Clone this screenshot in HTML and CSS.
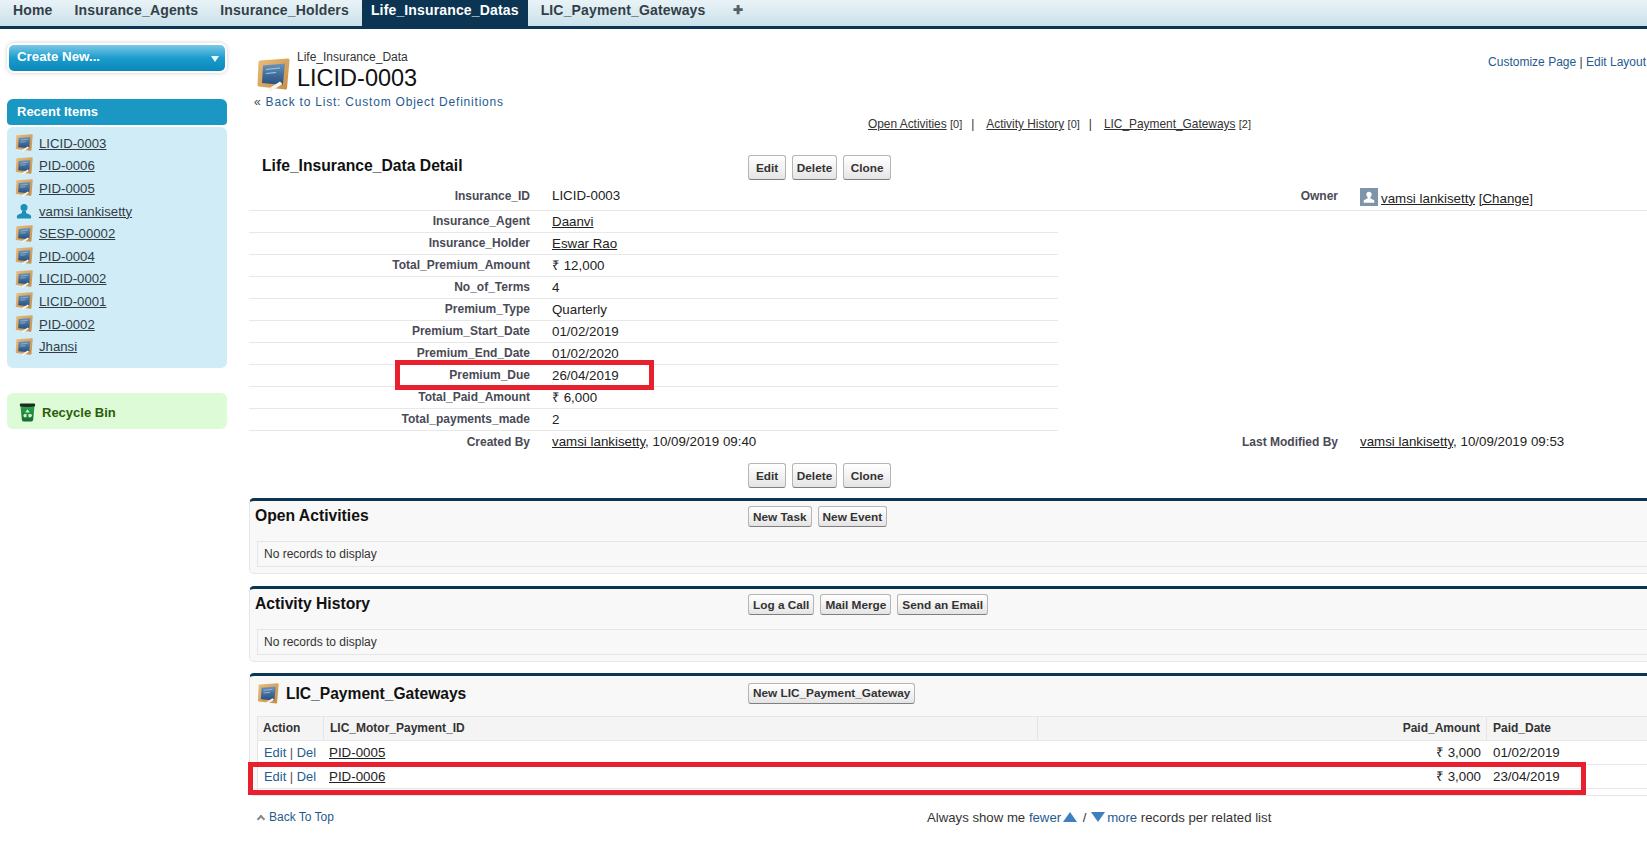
FILE: index.html
```html
<!DOCTYPE html>
<html lang="en">
<head>
<meta charset="utf-8">
<title>Life_Insurance_Data LICID-0003</title>
<link rel="stylesheet" href="styles.css">
</head>
<body>
<svg class="defs" width="0" height="0" aria-hidden="true">
  <defs>
    <linearGradient id="board" x1="0" y1="0" x2="0" y2="1">
      <stop offset="0" stop-color="#6c95bd"/>
      <stop offset=".55" stop-color="#3f6b99"/>
      <stop offset="1" stop-color="#2a4f7c"/>
    </linearGradient>
    <linearGradient id="frame" x1="0" y1="0" x2="1" y2="1">
      <stop offset="0" stop-color="#e8bb78"/>
      <stop offset="1" stop-color="#c98f45"/>
    </linearGradient>
    <linearGradient id="binfill" x1="0" y1="0" x2="0" y2="1">
      <stop offset="0" stop-color="#2ea64f"/>
      <stop offset="1" stop-color="#126b2c"/>
    </linearGradient>
  </defs>
  <symbol id="tile" viewBox="0 0 34 34">
    <path d="M4 4 L32 2 L29.500 30 L3 27 Z" fill="url(#frame)" stroke="url(#frame)" stroke-width="3" stroke-linejoin="round"/>
    <path d="M7 7.500 L29 5.500 L26.800 27 L6 25 Z" fill="url(#board)"/>
    <path d="M10 11.500 L24 10 M10 15.500 L20 14.500" stroke="#a9c6df" stroke-width="1.200" fill="none"/>
    <path d="M12 31 L24 23.500 L26.500 26 L15.500 33 Q12 33.500 12 31 Z" fill="#f4f4f0"/>
  </symbol>
  <symbol id="person" viewBox="0 0 16 16">
    <circle cx="8" cy="4.500" r="3.500"/>
    <path d="M6 8 H10 V10 L14.500 12 Q15.500 13 15 15.500 H1 Q.5 13 1.500 12 L6 10 Z"/>
  </symbol>
</svg>

<nav class="tabbar">
  <a class="tab">Home</a>
  <a class="tab">Insurance_Agents</a>
  <a class="tab">Insurance_Holders</a>
  <a class="tab tab-active">Life_Insurance_Datas</a>
  <a class="tab">LIC_Payment_Gateways</a>
  <a class="tab tab-plus">&#10010;</a>
</nav>

<div class="shell">
  <aside class="sidebar">
    <div class="create-wrap">
      <div class="create"><span>Create New...</span><i class="create-caret"></i></div>
    </div>
    <h2 class="recent-head">Recent Items</h2>
    <ul class="recent">
      <li><svg class="ri"><use href="#tile"/></svg><a>LICID-0003</a></li>
      <li><svg class="ri"><use href="#tile"/></svg><a>PID-0006</a></li>
      <li><svg class="ri"><use href="#tile"/></svg><a>PID-0005</a></li>
      <li><svg class="ri ri-person"><use href="#person"/></svg><a>vamsi lankisetty</a></li>
      <li><svg class="ri"><use href="#tile"/></svg><a>SESP-00002</a></li>
      <li><svg class="ri"><use href="#tile"/></svg><a>PID-0004</a></li>
      <li><svg class="ri"><use href="#tile"/></svg><a>LICID-0002</a></li>
      <li><svg class="ri"><use href="#tile"/></svg><a>LICID-0001</a></li>
      <li><svg class="ri"><use href="#tile"/></svg><a>PID-0002</a></li>
      <li><svg class="ri"><use href="#tile"/></svg><a>Jhansi</a></li>
    </ul>
    <div class="recycle">
      <svg class="bin" viewBox="0 0 18 20">
        <path d="M1.500 2 H16.500 L15 17.500 Q14.800 19.500 13 19.500 H5 Q3.200 19.500 3 17.500 Z" fill="url(#binfill)"/>
        <path d="M1 1.500 Q1 .5 2 .5 H16 Q17 .5 17 1.500 V3.500 Q9 5 1 3.500 Z" fill="#1c2a20"/>
        <path d="M9 6.500 L11.500 10 H6.500 Z M5.500 11.500 H8 V15 H5.500 L4.500 13.500 Z M10 11.500 H13 L13.800 13.500 L12.500 15 H10 Z" fill="#c8f0cf"/>
      </svg>
      <span>Recycle Bin</span>
    </div>
  </aside>

  <main class="main">
    <header class="page-head">
      <svg class="page-icon"><use href="#tile"/></svg>
      <div class="page-titles">
        <div class="page-type">Life_Insurance_Data</div>
        <h1 class="page-name">LICID-0003</h1>
      </div>
      <div class="page-links"><a>Customize Page</a> | <a>Edit Layout</a></div>
    </header>
    <div class="back"><span class="back-q">«</span> <a>Back to List: Custom Object Definitions</a></div>

    <div class="rel-links">
      <a>Open Activities</a> <small>[0]</small><span class="rel-sep">|</span><a>Activity History</a> <small>[0]</small><span class="rel-sep">|</span><a>LIC_Payment_Gateways</a> <small>[2]</small>
    </div>

    <section class="detail">
      <div class="detail-head">
        <h2 class="detail-title">Life_Insurance_Data Detail</h2>
        <div class="btns btns-lg"><button>Edit</button><button class="btn-tight">Delete</button><button>Clone</button></div>
      </div>
      <div class="row row-wide row-first">
        <span class="lbl">Insurance_ID</span><span class="val">LICID-0003</span>
        <span class="lbl lbl2">Owner</span>
        <span class="val val-owner"><span class="owner-pic"><svg><use href="#person"/></svg></span><span class="owner-text"><a>vamsi lankisetty</a> <a>[Change]</a></span></span>
      </div>
      <div class="row"><span class="lbl">Insurance_Agent</span><span class="val"><a>Daanvi</a></span></div>
      <div class="row"><span class="lbl">Insurance_Holder</span><span class="val"><a>Eswar Rao</a></span></div>
      <div class="row"><span class="lbl">Total_Premium_Amount</span><span class="val">₹ 12,000</span></div>
      <div class="row"><span class="lbl">No_of_Terms</span><span class="val">4</span></div>
      <div class="row"><span class="lbl">Premium_Type</span><span class="val">Quarterly</span></div>
      <div class="row"><span class="lbl">Premium_Start_Date</span><span class="val">01/02/2019</span></div>
      <div class="row"><span class="lbl">Premium_End_Date</span><span class="val">01/02/2020</span></div>
      <div class="row row-marked"><span class="lbl">Premium_Due</span><span class="val">26/04/2019</span><i class="mark mark-due"></i></div>
      <div class="row"><span class="lbl">Total_Paid_Amount</span><span class="val">₹ 6,000</span></div>
      <div class="row"><span class="lbl">Total_payments_made</span><span class="val">2</span></div>
      <div class="row row-wide row-last">
        <span class="lbl">Created By</span><span class="val"><a>vamsi lankisetty</a>, 10/09/2019 09:40</span>
        <span class="lbl lbl2">Last Modified By</span><span class="val"><a>vamsi lankisetty</a>, 10/09/2019 09:53</span>
      </div>
      <div class="btns btns-lg btns-foot"><button>Edit</button><button class="btn-tight">Delete</button><button>Clone</button></div>
    </section>

    <section class="panel">
      <div class="panel-head">
        <h3 class="panel-title">Open Activities</h3>
        <div class="btns"><button>New Task</button><button>New Event</button></div>
      </div>
      <div class="empty">No records to display</div>
    </section>

    <section class="panel">
      <div class="panel-head">
        <h3 class="panel-title">Activity History</h3>
        <div class="btns"><button>Log a Call</button><button>Mail Merge</button><button>Send an Email</button></div>
      </div>
      <div class="empty">No records to display</div>
    </section>

    <section class="panel panel-list">
      <div class="panel-head panel-head-list">
        <h3 class="panel-title"><svg class="list-icon"><use href="#tile"/></svg>LIC_Payment_Gateways</h3>
        <div class="btns"><button>New LIC_Payment_Gateway</button></div>
      </div>
      <div class="list">
        <div class="list-row list-header">
          <span class="c-act">Action</span><span class="c-id">LIC_Motor_Payment_ID</span><span class="c-amt">Paid_Amount</span><span class="c-date">Paid_Date</span>
        </div>
        <div class="list-row">
          <span class="c-act"><a class="lnk">Edit</a> | <a class="lnk">Del</a></span><span class="c-id"><a>PID-0005</a></span><span class="c-amt">₹ 3,000</span><span class="c-date">01/02/2019</span>
        </div>
        <div class="list-row">
          <span class="c-act"><a class="lnk">Edit</a> | <a class="lnk">Del</a></span><span class="c-id"><a>PID-0006</a></span><span class="c-amt">₹ 3,000</span><span class="c-date">23/04/2019</span>
        </div>
        <i class="mark mark-pay"></i>
      </div>
    </section>

    <footer class="foot">
      <div class="foot-top"><i class="foot-caret"></i><a>Back To Top</a></div>
      <div class="foot-more">Always show me <a>fewer</a><i class="tri tri-up"></i> / <i class="tri tri-down"></i><a>more</a> records per related list</div>
    </footer>
  </main>
</div>
</body>
</html>
```
FILE: styles.css
```css
* { box-sizing: border-box; }
html, body { margin: 0; height: 849px; overflow: hidden; background: #fff; }
body { font-family: "Liberation Sans", Arial, sans-serif; font-size: 12px; color: #222; width: 1647px; }
a { color: inherit; }
h1, h2, h3, ul { margin: 0; padding: 0; }
.defs { position: absolute; }

/* tab bar */
.tabbar { display: flex; gap: 4px; height: 29px; padding-left: 4px; border-bottom: 3px solid #0b3553; background: linear-gradient(#e9f3f7, #cbe1ea); }
.tab { display: block; padding: 0 9px; line-height: 20px; font-size: 14px; font-weight: 700; letter-spacing: .15px; color: #333f48; }
.tab-active { color: #fff; background: #0b3553; }
.tab-plus { margin-left: 6px; font-size: 12px; color: #555f66; }

/* layout */
.shell { display: flex; align-items: flex-start; }
.sidebar { flex: none; width: 220px; margin: 16px 0 0 7px; }
.main { flex: none; width: 1500px; margin-left: 22px; padding-top: 22px; }

/* sidebar */
.create-wrap { padding: 0 2px; }
.create { display: flex; align-items: center; justify-content: space-between; height: 26px; padding: 0 6px 3px 8px; border-radius: 5px; background: linear-gradient(#7cc9e6, #1b9ccd 50%, #0a88b9); box-shadow: 0 0 0 2px #fff, 0 0 4px 2px #ccc; color: #fff; font-size: 13.300px; font-weight: 700; }
.create-caret { width: 0; height: 0; margin-top: 5px; border: 4.500px solid transparent; border-top: 6px solid #eef8fc; border-bottom: 0; }
.recent-head { height: 26px; margin-top: 28px; padding-left: 10px; border-radius: 6px 6px 4px 4px; background: #1a97c3; color: #fff; font-size: 13px; font-weight: 700; line-height: 26px; }
.recent { margin-top: 2px; height: 241px; padding: 5px 0 0 8px; border-radius: 6px; background: #cfecf7; list-style: none; }
.recent li { display: flex; align-items: center; gap: 6px; height: 22.600px; font-size: 13.200px; color: #333c44; }
.recent a { text-decoration: underline; }
.ri { flex: none; width: 18px; height: 18px; }
.ri-person { fill: #1d8fb8; padding: 1px; }
.recycle { display: flex; align-items: center; gap: 6px; height: 36px; margin-top: 25px; padding: 3px 0 0 12px; border-radius: 6px; background: #dcfbd6; color: #2d5b0b; font-size: 13px; font-weight: 700; }
.bin { width: 17px; height: 19px; }

/* header */
.page-head { display: flex; align-items: flex-start; width: 1397px; padding-left: 7px; height: 44px; }
.page-icon { flex: none; width: 34px; height: 34px; margin-top: 7px; }
.page-titles { margin-left: 7px; }
.page-type { font-size: 12px; line-height: 13px; color: #333; }
.page-name { font-size: 23.500px; font-weight: 400; line-height: 28px; color: #111; }
.page-links { margin: 4px 0 0 auto; white-space: nowrap; color: #333; line-height: 14px; }
.page-links a, .back a, .lnk, .foot-more a, .foot-top a { color: #1f5b8f; }
.back { padding-left: 5px; height: 15px; line-height: 15px; letter-spacing: .79px; color: #444; }
.rel-links { margin: 6px 0 0 619px; height: 20px; line-height: 16px; font-size: 11.900px; color: #333; }
.rel-links a { text-decoration: underline; }
.rel-links small { font-size: 11px; }
.rel-sep { margin: 0 12px 0 9px; }

/* detail */
.detail { margin-top: 19px; }
.detail-head { display: flex; align-items: center; height: 25px; padding-left: 13px; }
.detail-title { width: 486px; margin-top: -3px; font-size: 15.700px; font-weight: 700; color: #111; }
.btns { display: flex; gap: 6px; }
.btns button { height: 21px; padding: 0 4px; border: 1px solid #b5b5b5; border-bottom-color: #7f7f7f; border-radius: 3px; background: linear-gradient(#fff, #f0f0f0 60%, #e4e4e4); color: #333; font: 700 11.800px "Liberation Sans", Arial, sans-serif; white-space: nowrap; }
.btns-lg button { height: 25px; padding: 0 7px; }
.btns-lg .btn-tight { padding: 0 3.500px; }
.btns-foot { margin: 10px 0 0 499px; }
.row { position: relative; display: flex; width: 809px; height: 22px; padding-bottom: 1px; align-items: center; border-bottom: 1px solid #e8e8e8; }
.row-wide { width: 100%; }
.row-first { height: 31px; padding: 1px 0 0; }
.row-last { border-bottom: 0; }
.lbl { flex: none; width: 281px; text-align: right; font-weight: 700; color: #4a4a56; }
.val { flex: none; width: 530px; padding-left: 22px; font-size: 13.330px; color: #222; white-space: nowrap; }
.val a { text-decoration: underline; }
.lbl2 { width: 278px; }
.val-owner { display: flex; align-items: center; gap: 3px; margin-top: 5px; }
.owner-pic { display: flex; width: 18px; height: 18px; padding: 3px; background: #7d94aa; fill: #fff; margin-top: -3px; }
.owner-pic svg { width: 12px; height: 12px; }
.mark { position: absolute; border: 5px solid #e8202e; pointer-events: none; }
.mark-due { left: 146px; top: -5px; width: 259px; height: 30px; }

/* panels */
.panel { height: 76px; margin-top: 10px; border-top: 3px solid #0b3553; border-left: 1px solid #e6e6e6; border-bottom: 1px solid #e6e6e6; border-radius: 5px 0 0 5px; background: #f8f8f8; }
.panel + .panel { margin-top: 12px; }
.panel-head { display: flex; align-items: center; height: 40px; padding: 0 0 9px 5px; }
.panel-title { display: flex; align-items: center; width: 493px; margin-top: -1px; font-size: 15.700px; font-weight: 700; color: #111; }
.empty { height: 26px; margin-left: 7px; padding-left: 6px; border: 1px solid #e6e6e6; border-right: 0; line-height: 24px; color: #333; }
.panel + .panel-list { height: 123px; margin-top: 11px; }
.panel-head-list { padding: 0 0 5px 7px; }
.panel-list .panel-title { width: 491px; margin-top: 1px; font-size: 15.600px; }
.panel-list .btns { margin-top: -1px; }
.list-icon { width: 22px; height: 24px; margin-right: 7px; }
.list { position: relative; height: 80px; margin-left: 7px; border: 1px solid #e6e6e6; border-right: 0; background: #fff; }
.list-row { display: flex; height: 24px; padding-bottom: 1px; align-items: center; border-bottom: 1px solid #e8e8e8; }
.list-header { padding-bottom: 0; background: #f4f4f4; font-weight: 700; color: #333; }
.list-header span { align-self: stretch; line-height: 23px; border-right: 1px solid #e4e4e4; }
.c-act { flex: none; width: 66px; padding-left: 6px; font-size: 12.900px; color: #555; }
.list-header .c-act { padding-left: 5px; font-size: 12px; color: #333; }
.c-id { flex: none; width: 714px; padding-left: 5px; font-size: 13.330px; }
.list-header .c-id { font-size: 12px; padding-left: 6px; }
.c-id a { text-decoration: underline; }
.c-amt { flex: none; width: 449px; padding-right: 6px; text-align: right; font-size: 13.330px; }
.list-header .c-amt, .list-header .c-date { font-size: 12px; }
.c-date { flex: none; width: 240px; padding-left: 6px; font-size: 13.330px; }
.list-header .c-date { border-right: 0; }
.mark-pay { left: -10px; top: 45px; width: 1338px; height: 33px; }

/* footer */
.foot { display: flex; align-items: center; margin-top: 14px; height: 14px; padding-left: 9px; }
.foot-top { display: flex; align-items: center; gap: 5px; width: 669px; }
.foot-caret { width: 6px; height: 6px; margin-top: 3px; border-top: 2px solid #888; border-left: 2px solid #888; transform: rotate(45deg); }
.foot-more { display: flex; align-items: center; white-space: pre; font-size: 13.200px; color: #333; }
.tri { width: 0; height: 0; margin: 0 2px; border-left: 7px solid transparent; border-right: 7px solid transparent; }
.tri-up { border-bottom: 10px solid #3f7fc0; }
.tri-down { margin-left: 1px; border-top: 10px solid #3f7fc0; }
```
